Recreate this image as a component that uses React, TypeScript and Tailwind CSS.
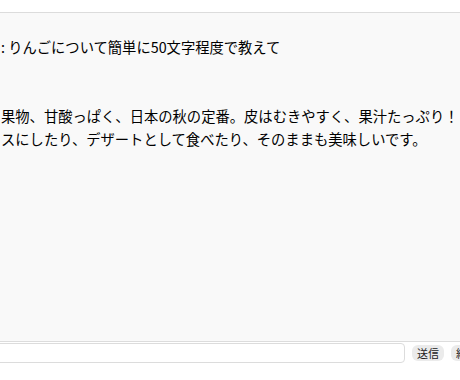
export default function App() {
  return (
    <div
      className="w-[460px] h-[380px] overflow-hidden bg-white text-black"
      style={{ fontFamily: '"Noto Sans CJK JP", "Noto Sans", sans-serif' }}
    >
      <div className="pt-[12px]">
        {/* chat log */}
        <div className="h-[330px] border-y border-[#dcdcdc] bg-[#f9f9f9] pt-[22px] text-[14.3px] leading-[23px] whitespace-nowrap">
          <div className="pl-[1px]">: りんごについて簡単に50文字程度で教えて</div>
          <div className="mt-[46px] pl-[1px]">
            <div>果物、甘酸っぱく、日本の秋の定番。皮はむきやすく、果汁たっぷり！</div>
            <div>スにしたり、デザートとして食べたり、そのままも美味しいです。</div>
          </div>
        </div>

        {/* input row */}
        <div className="flex items-center h-[21px]">
          <div className="w-[409px] h-[20px] -ml-[4px] rounded-[4px] border border-[#dcdcdc] bg-white shrink-0" />
          <button className="ml-[7px] h-[16px] px-[5px] rounded-[6px] bg-[#ebebeb] text-[11px] leading-[16px] text-[#222] shrink-0">
            送信
          </button>
          <button className="ml-[7px] h-[16px] px-[5px] rounded-[6px] bg-[#ebebeb] text-[11px] leading-[16px] text-[#222] shrink-0">
            終了
          </button>
        </div>
      </div>
    </div>
  )
}
